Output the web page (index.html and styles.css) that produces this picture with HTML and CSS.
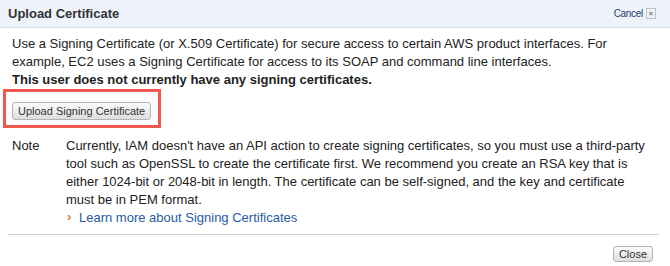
FILE: index.html
```html
<!DOCTYPE html>
<html lang="en">
  <head>
    <meta charset="UTF-8" />
    <title>Upload Certificate</title>
    <link rel="stylesheet" href="styles.css">
  </head>
  <body>
    <div class="dialog">
      <div class="dialog-header">
        <h2>Upload Certificate</h2>
        <a class="cancel" href="#">Cancel <span class="close-x">&#x2715;</span></a>
      </div>
      <div class="dialog-body">
        <p class="intro">
          Use a Signing Certificate (or X.509 Certificate) for secure access to certain AWS product interfaces. For
          example, EC2 uses a Signing Certificate for access to its SOAP and command line interfaces.
          <strong>This user does not currently have any signing certificates.</strong>
        </p>
        <div class="highlight">
          <button type="button" class="btn">Upload Signing Certificate</button>
        </div>
        <div class="note">
          <span class="note-label">Note</span>
          <div class="note-text">
            <p>Currently, IAM doesn't have an API action to create signing certificates, so you must use a third-party
            tool such as OpenSSL to create the certificate first. We recommend you create an RSA key that is
            either 1024-bit or 2048-bit in length. The certificate can be self-signed, and the key and certificate
            must be in PEM format.</p>
            <a class="learn" href="#">Learn more about Signing Certificates</a>
          </div>
        </div>
      </div>
      <div class="dialog-footer">
        <button type="button" class="btn">Close</button>
      </div>
    </div>
  </body>
</html>
```

FILE: styles.css
```css
body {
  margin: 0;
  font-family: "Liberation Sans", Arial, sans-serif;
  color: #222;
  background-color: #fff;
}
.dialog {
  width: 670px;
  height: 266px;
  overflow: hidden;
}
.dialog-header {
  display: flex;
  align-items: center;
  justify-content: space-between;
  height: 27px;
  padding: 0 14px 0 8px;
  background-color: #eef2fb;
  border-bottom: 1px solid #d3dcec;
}
.dialog-header h2 {
  margin: 0;
  font-size: 13px;
  font-weight: bold;
  color: #333;
}
.cancel {
  display: flex;
  align-items: center;
  gap: 3px;
  font-size: 10px;
  color: #1d3d73;
  text-decoration: none;
  letter-spacing: -0.3px;
}
.close-x {
  display: inline-flex;
  align-items: center;
  justify-content: center;
  width: 8px;
  height: 9px;
  border: 1px solid #b9c2d2;
  background-color: #f2f2f2;
  color: #666;
  font-size: 7px;
}
.dialog-body {
  padding: 7px 12px 0 12px;
}
.intro {
  margin: 0;
  font-size: 13px;
  line-height: 18px;
}
.intro strong {
  display: block;
}
.highlight {
  display: inline-block;
  margin: 0 0 0 -9px;
  padding: 9px 7px 5px 6px;
  border: 3px solid #f0574f;
}
.btn {
  font-family: "Liberation Sans", Arial, sans-serif;
  font-size: 11px;
  color: #333;
  padding: 1px 5px;
  height: 18px;
  border: 1px solid #b4b4b4;
  border-radius: 3px;
  background: linear-gradient(#fbfbfb, #dedede);
}
.note {
  display: flex;
  margin-top: 9px;
  font-size: 13px;
  line-height: 18px;
}
.note-label {
  width: 54px;
  flex-shrink: 0;
}
.note-text {
  width: 586px;
}
.note-text p {
  margin: 0;
}
.learn {
  display: inline-block;
  padding-left: 13px;
  color: #1f5ba5;
  text-decoration: none;
  position: relative;
}
.learn::before {
  content: "\203A";
  position: absolute;
  left: 1px;
  top: -1px;
  color: #e07a1f;
  font-weight: bold;
}
.dialog-footer {
  display: flex;
  justify-content: flex-end;
  margin: 7px 11px 0 8px;
  padding: 11px 6px 0 0;
  border-top: 1px solid #cfcfcf;
}
.dialog-footer .btn {
  padding: 1px 5px;
  height: 16px;
}
```
